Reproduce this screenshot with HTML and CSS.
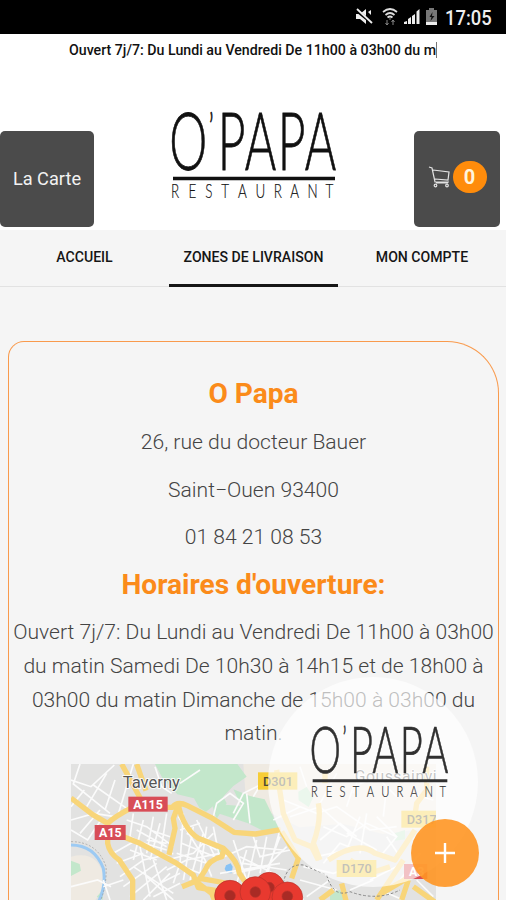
FILE: index.html
```html
<!DOCTYPE html>
<html lang="fr">
<head>
<meta charset="utf-8">
<title>O'Papa Restaurant</title>
<link rel="stylesheet" href="styles.css">
</head>
<body>
<div class="statusbar">
  <svg class="status-icons" viewBox="0 0 86 20" width="86" height="20">
    <g fill="#eee"><path d="M1 7h4l6-5v15l-6-5H1z"/><path d="M13 5l3-2v5z"/></g>
    <path d="M1 3l16 13" stroke="#000" stroke-width="3"/><path d="M2 2l15 14" stroke="#eee" stroke-width="1.8"/>
    <g fill="none" stroke="#ddd" stroke-width="1.7"><path d="M28 5q7-6 14 0M30.500 8q4.500-4 9 0M32.500 10.500q2.500-2 5 0"/></g>
    <path d="M35 10v3M32 13v5m-1.500-2l1.500 2 1.500-2M38 18v-5m-1.500 2l1.500-2 1.500 2" stroke="#888" fill="none"/>
    <g fill="#eee"><path d="M49 17v-2l3-1v3zM53 17v-5l3-2v7zM57 17v-8l3-2v10zM61.500 17V4.500l3-2.500v15z"/></g>
    <path d="M74 3V1h5v2h3v15H71V3z" fill="#777"/><path d="M77.500 5l-3 5h2l-1 4 4-5h-2.500z" fill="#111"/><path d="M71 15h11v3H71z" fill="#eee"/>
  </svg>
  <span class="clock">17:05</span>
</div>
<header class="header">
  <div class="ticker"><span>Ouvert 7j/7: Du Lundi au Vendredi De 11h00 à 03h00 du m</span><i class="caret"></i></div>
  <div class="brand-row">
    <a class="menu-button">La Carte</a>
    <svg class="logo" viewBox="0 0 166 94">
      <g transform="scale(.6 1)"><text class="logo-name" y="61.500" x="-3">O</text><text class="logo-name apostrophe" y="34" x="63">’</text><text class="logo-name" y="61.500" x="78 123 178 223">PAPA</text></g>
      <path d="M2 70.500h162" stroke="currentColor" stroke-width="3.400"/>
      <g transform="scale(.69 1)"><text class="logo-sub" y="90" x="0 25.500 49.500 73 97 122.500 149 173 198 224">RESTAURANT</text></g>
    </svg>
    <a class="cart-button">
      <svg viewBox="0 0 24 24" width="24" height="24" fill="none" stroke="#e4e4e4" stroke-width="1.200"><path d="M1 2l3 1 3 14h14M5 5l16 2-1 8L7 14M8 18h12"/><circle cx="7.500" cy="20.500" r="1.300"/><circle cx="19" cy="20.500" r="1.300"/></svg>
      <b class="count">0</b>
    </a>
  </div>
</header>
<nav class="tabs">
  <a class="tab"><span>ACCUEIL</span></a>
  <a class="tab active"><span>ZONES DE LIVRAISON</span></a>
  <a class="tab"><span>MON COMPTE</span></a>
</nav>
<main class="card">
  <h2>O Papa</h2>
  <p>26, rue du docteur Bauer</p>
  <p>Saint−Ouen 93400</p>
  <p>01 84 21 08 53</p>
  <h2 class="hours-title">Horaires d'ouverture:</h2>
  <p class="hours">Ouvert 7j/7: Du Lundi au Vendredi De 11h00 à 03h00<br>du matin Samedi De 10h30 à 14h15 et de 18h00 à<br>03h00 du matin Dimanche de 15h00 à 03h00 du<br>matin.</p>
  <svg class="map" viewBox="213 492 1095 408">
    <path fill="#e2e2e1" d="M213 492h1095v480H213z"/>
    <path fill="#efeae2" d="M213 770q80-20 98 60 0 60-50 90h-48zM730 492h578v190l-160 20-120-30-130 10-160-80z"/>
    <g fill="#c3e7cb">
      <path d="M465 492h247l28 38-40 28-48 50-34 27-20-12-16-28-50-12-45-50z"/>
      <path d="M700 568l50 20 44 10 44 90-30 14-64-32-90-30 20-26 50 4z"/>
      <path d="M660 570l20 40-30 46-12-36zM213 782l26 10 4 20-30 16zM895 575l25-14 20 30-14 30-30-20zM1185 700l30-10v28l-30 4zM645 735l22 10-8 26zM990 880l30-10 20 30h-50zM290 890l18-20v30z"/>
    </g>
    <path d="M213 735q70 0 97 70 10 60-20 110" fill="none" stroke="#9ccaf3" stroke-width="9"/>
    <path d="M213 725q80 0 105 75 4 60-24 120" fill="none" stroke="#999" stroke-width="2" stroke-dasharray="6 5"/>
    <path d="M678 796l14-6 6 10-3 20-14-1-7-12z" fill="#87c2f5"/>
    <g class="streets">
      <path d="M213 540l60 20 70-65M240 492l-20 60 110 88M280 555l100 70M320 520l-60 100M345 540l-30 90M213 620l40-50M400 492l-45 150M213 660l70-20 60 10M240 700l60-70M213 690l50 30 40-60"/>
      <path d="M380 660l60 20 80 60M400 640l-10 70 60 30M430 660l-30 120M460 650l-20 110M480 670l-30 110M410 690l90 50M400 720l100 30M390 750l80 30M500 640l-20 130M450 690l60 20M440 720l60 10"/>
      <path d="M535 650l80 130 20 50M550 640l-10 150-20 60M580 680l-30 160M610 700l-40 140M640 700l-60 60-80 20M560 700l90 50M545 730l100 40M530 760l90 30M520 790l80 30M540 690l60-20M590 660l60 120M500 810l60-30 100-20M620 680l-20 140M640 680l20 100"/>
      <path d="M340 760l70-40M350 790l80-30M360 830l70-50 90-20M370 860l100-70M390 890l110-90M430 900l80-80M460 780l40 120M420 740l30 150M400 800l120 80M440 830l80 70M480 850l60-30M460 890l80-40M310 860l60-20M213 860l80-20 40 20M330 900l-20-60"/>
      <path d="M465 500l20 60 30 20M540 550l60-40M640 650l10-40 40-30 40 30-30 50M760 590l30-50 30 20M740 580l10 90M820 660l80-40M700 640l30-60 60-30 40 10M610 640l90 60M760 710l20 60 90-20M650 780l90-40 110 10M700 820l100-20 60-60M710 850l30-100M740 850l30-130M780 820l20-110M800 830l40-140M730 790l130 20M720 770l120 60M700 720l40 120M840 710l-50 130M660 820l180-30"/>
      <path d="M850 600l100 40 60-20 100 70 80-10M870 650l90-30 100 90M960 610l50-90M1040 620l20-60 70-30 60 60M1080 650l-40 100-90 20M970 680l70 30 60-40 90 40M960 720l60-50 50 40M1100 640l-20 120M1130 650l60 60-50 60M1160 560l-10 90M1040 700l90 50M900 840l110 30M910 800l90 20 60-20M920 890l70-50M1140 870l70 30M1110 840l100-50M1240 720l60-70M1250 840l50 50M1160 710l40 60M970 790l50-60 50 20M1050 870l70-30M880 860l30 40M1230 580l70 20M1260 760l-60 80M1080 520l-20 60M900 500l20 60"/>
    </g>
    <g class="roads">
      <path d="M213 594l65 50 45 26q20-20 74-48h120q15-20 45-5l70 35 70 45 65 5 75-13M323 670v60q5 30 35 50l40 60v60M370 710l50 20 110 60 50 35 15 38 60 10M535 615l-15 40 5 30-18 80M535 615q15 70 60 100l75 30q45 40 48 75l40 60M670 750l-4 20q-40 10-50 40l-20 30-50 20M600 835l110 20 30 20M365 492l60 110M410 492l28 80M595 850l40 30 12 30"/>
      <path d="M830 510l20 130 35 80 50 20 20 40M955 610q10 50-15 120l20 50M845 695l50 80-20 60M1000 870l-40 30M985 780q90-60 140-20l60 20 60-90M1025 850l15 60M1130 900l80-120M1145 880l85-50M1225 840l-20 60M1240 860l70 50M1240 680l10-70 30-40v-70M975 510v40M1050 780l60 40 60-20"/>
    </g>
    <path d="M850 850q10-60 60-55l70 30q20 70 70 50 80 30 150-5" fill="none" stroke="#888" stroke-width="3" stroke-dasharray="8 6"/>
    <g class="place"><text x="368" y="564" textLength="172" lengthAdjust="spacingAndGlyphs">Taverny</text><text x="1064" y="545" textLength="246">Goussainvi</text></g>
    <g class="road-red"><rect x="385" y="590" width="118" height="45"/><rect x="284" y="675" width="93" height="45"/><rect x="1212" y="792" width="70" height="45"/><text x="444" y="627">A115</text><text x="331" y="712">A15</text><text x="1250" y="829">A3</text></g>
    <g class="road-yellow"><rect x="774" y="517" width="118" height="52"/><rect x="1204" y="632" width="120" height="51"/><rect x="1010" y="780" width="119" height="51"/><text x="834" y="557">D301</text><text x="1265" y="671">D317</text><text x="1070" y="819">D170</text></g>
    <g class="pins"><g><circle cx="808" cy="862" r="45"/><circle class="dot" cx="808" cy="862" r="15"/></g><g><circle cx="690" cy="887" r="46"/><circle class="dot" cx="690" cy="887" r="16"/></g><g><circle cx="862" cy="892" r="46"/><circle class="dot" cx="862" cy="889" r="16"/></g><g><circle cx="766" cy="876" r="46"/><circle class="dot" cx="766" cy="876" r="16"/></g></g>
  </svg>
</main>
<div class="bubble">
  <svg class="logo" viewBox="0 0 166 94" preserveAspectRatio="none">
    <g transform="scale(.6 1)"><text class="logo-name" y="61.500" x="-3">O</text><text class="logo-name apostrophe" y="34" x="63">’</text><text class="logo-name" y="61.500" x="78 123 178 223">PAPA</text></g>
    <path d="M2 70.500h162" stroke="currentColor" stroke-width="3.400"/>
    <g transform="scale(.69 1)"><text class="logo-sub" y="90" x="0 25.500 49.500 73 97 122.500 149 173 198 224">RESTAURANT</text></g>
  </svg>
</div>
<a class="fab"><svg viewBox="0 0 20 20" width="20" height="20"><path d="M10 0v20M0 10h20" stroke="#fff" stroke-width="2.400"/></svg></a>
</body>
</html>
```
FILE: styles.css
```css
* { box-sizing: border-box; }
body {
  margin: 0;
  position: relative;
  height: 900px;
  overflow: hidden;
  background: #f5f5f5;
  color: #444;
  font-family: Roboto, "Liberation Sans", sans-serif;
}
.statusbar {
  height: 34px;
  background: #000;
  display: flex;
  justify-content: flex-end;
  align-items: center;
  gap: 4px;
  padding-right: 15px;
}
.clock { color: #eee; font-size: 20px; font-weight: 500; width: 46px; white-space: nowrap; transform-origin: left; transform: translateY(1px) scaleX(.92); }
.header { height: 196px; background: #fff; }
.ticker {
  height: 33px;
  display: flex;
  justify-content: center;
  align-items: center;
  padding-bottom: 2px;
  color: #111;
  font-size: 14.200px;
  font-weight: 500;
}
.ticker span { white-space: nowrap; }
.caret { width: 1px; height: 16px; background: #777; }
.brand-row {
  height: 163px;
  display: flex;
  justify-content: space-between;
  align-items: flex-end;
  padding: 0 6px 3px 0;
}
.menu-button, .cart-button {
  height: 96px;
  display: flex;
  align-items: center;
  justify-content: center;
  border-radius: 5px;
  background: #4b4b4b;
  color: #f2f2f2;
}
.menu-button { width: 94px; font-size: 18.200px; padding-bottom: 2px; }
.cart-button { width: 86px; gap: 1px; padding-bottom: 5px; }
.count {
  width: 34px;
  height: 32px;
  border-radius: 16px;
  background: #ff8c0b;
  color: #fff4dc;
  font-size: 20px;
  line-height: 32px;
  text-align: center;
}
.logo { display: block; width: 166px; height: 94px; overflow: visible; color: #111; }
.brand-row .logo { margin: 0 0 25px -1px; align-self: flex-end; }
.logo-name { font: 300 80px Lato, sans-serif; fill: currentColor; stroke: currentColor; stroke-width: .8; }
.logo-name.apostrophe { font-size: 40px; }
.logo-sub { font: 300 19.5px Lato, sans-serif; fill: currentColor; stroke: currentColor; stroke-width: .2; }
.tabs {
  height: 57px;
  display: grid;
  grid-template-columns: 169px 169px 168px;
  border-bottom: 1px solid #e2e2e2;
}
.tab {
  display: flex;
  align-items: center;
  justify-content: center;
  color: #161616;
  font-size: 14.100px;
  font-weight: 500;
  height: 57px;
  border-bottom: 3px solid transparent;
}
.tab.active { border-bottom-color: #161616; }
.card {
  margin: 54px 7px 0 8px;
  height: 559px;
  overflow: hidden;
  padding-top: 28px;
  border: 1px solid #f99a4c;
  border-bottom: 0;
  border-radius: 16px 52px 0 0;
  text-align: center;
}
h2 { margin: 0; color: #fb8b1a; font-size: 28.100px; font-weight: 700; line-height: 48px; }
p { margin: 0; font-size: 21.080px; font-weight: 300; line-height: 47.7px; white-space: nowrap; }
.hours { line-height: 33.7px; margin-top: 6px; }
.map { display: block; width: 365px; height: 136px; margin: 14px 0 0 62px; }
.streets { fill: none; stroke: #fbfbfb; stroke-width: 5; }
.roads { fill: none; stroke: #f8d579; stroke-width: 16; stroke-linejoin: round; }
.place { font-size: 47px; fill: #555; stroke: #fff; stroke-width: 5; paint-order: stroke; }
.road-red rect { fill: #d84d57; }
.road-red text { fill: #fff; font-size: 37px; font-weight: 700; text-anchor: middle; }
.road-yellow rect { fill: #f7cd36; }
.road-yellow text { fill: #4c4933; font-size: 38px; font-weight: 500; text-anchor: middle; }
.pins circle { fill: #e8392f; stroke: #b7322b; stroke-width: 2; }
.pins .dot { fill: #a92b25; }
.bubble {
  position: absolute;
  left: 268px;
  top: 677px;
  width: 210px;
  height: 210px;
  border-radius: 50%;
  background: rgba(255, 255, 255, .66);
  padding: 46px 0 0 43px;
}
.bubble .logo { width: 138px; height: 77px; color: #303030; }
.fab {
  position: absolute;
  left: 411px;
  top: 819px;
  width: 68px;
  height: 68px;
  border-radius: 50%;
  background: rgba(255, 150, 35, .9);
  display: flex;
  align-items: center;
  justify-content: center;
}
```
